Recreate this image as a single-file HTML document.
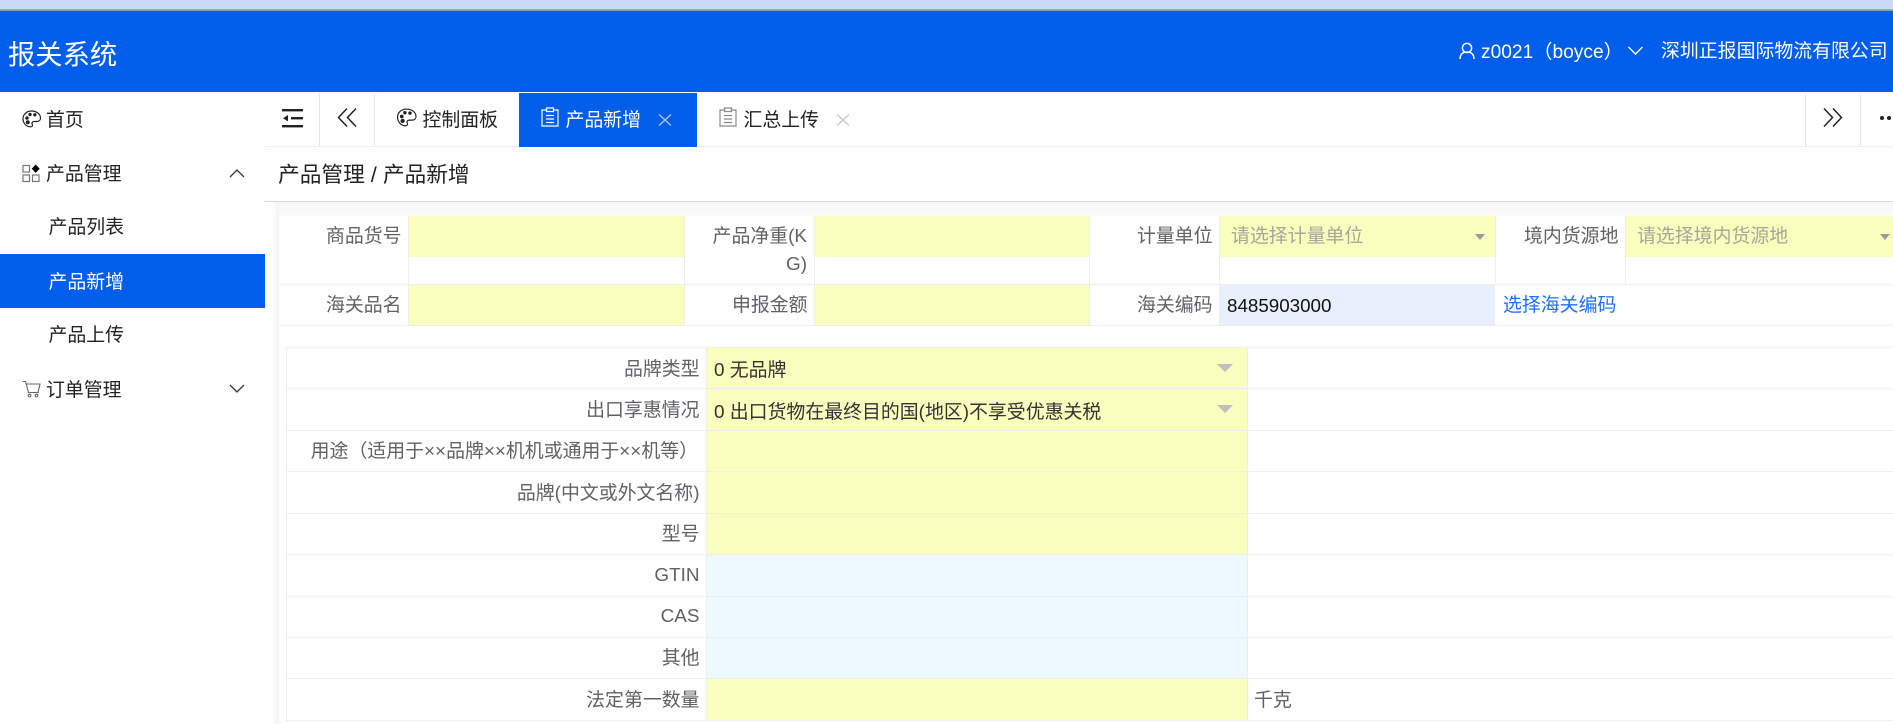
<!DOCTYPE html>
<html lang="zh"><head><meta charset="utf-8"><title>报关系统</title>
<style>
html,body{margin:0;padding:0;width:1893px;height:724px;overflow:hidden;background:#fff}
body{position:relative;font-family:"Liberation Sans","Noto Sans CJK SC",sans-serif;font-size:18.9px;color:#222}
.a,.t,svg{position:absolute}
.t{line-height:30px;white-space:nowrap;margin-top:-13.5px}
.r{text-align:right}
.l{color:#606266}
.y{background:#faffbd}
.b{background:#eef9ff}
.hl{background:#eeeeee}
</style></head><body>
<!-- top chrome -->
<div class="a" style="left:0;top:0;width:1893px;height:9px;background:#c9daf5"></div>
<div class="a" style="left:0;top:9px;width:1893px;height:2px;background:#8fa3c4"></div>
<div class="a" style="left:0;top:11px;width:1893px;height:81px;background:#005eeb"></div>
<div class="t" style="left:8px;top:53px;font-size:27.3px;color:#fff">报关系统</div>
<svg style="left:1458px;top:42px" width="18" height="18" viewBox="0 0 18 18" fill="none" stroke="#fff" stroke-width="1.5"><circle cx="9" cy="6" r="4.6"/><path d="M2 17c0-5 3-7 7-7s7 2 7 7"/></svg>
<div class="t" style="left:1481px;top:51px;color:#fff;font-size:19.2px">z0021（boyce）</div>
<svg style="left:1627px;top:46px" width="17" height="10" viewBox="0 0 17 10" fill="none" stroke="#fff" stroke-width="1.4"><path d="M1.500 1l7 7 7-7"/></svg>
<div class="t" style="left:1661px;top:50px;color:#fff">深圳正报国际物流有限公司</div>

<!-- sidebar -->
<svg style="left:22px;top:110px" width="19" height="18" viewBox="0 0 19 18" fill="none" stroke="#222" stroke-width="1.200"><path d="M9.500 1C4.500 1 1 4.500 1 8.800c0 4.500 3.500 8 7.500 8 2 0 2.300-1.300 1.700-2.500-.7-1.500.3-2.800 2-2.800h2.500c2.300 0 3.800-1.400 3.800-3.300C18.500 4 14.500 1 9.500 1z"/><circle cx="5" cy="8" r="1.200" fill="#222"/><circle cx="8" cy="4.500" r="1.100" fill="#222"/><circle cx="12.800" cy="4.800" r="1.100" fill="#222"/><circle cx="5.800" cy="12.300" r="1.400" fill="#222"/></svg>
<div class="t" style="left:46px;top:119px">首页</div>
<svg style="left:22px;top:164px" width="19" height="19" viewBox="0 0 19 19" fill="none" stroke="#777" stroke-width="1.200"><rect x="1" y="1.500" width="6.500" height="6.500"/><rect x="1" y="11" width="6.500" height="6.500"/><rect x="10.500" y="11" width="6.500" height="6.500"/><path d="M13.700.5l4 4.200-4 4.200-4-4.200z" fill="#000" stroke="none"/></svg>
<div class="t" style="left:46px;top:173px">产品管理</div>
<svg style="left:229px;top:169px" width="16" height="9" viewBox="0 0 16 9" fill="none" stroke="#333" stroke-width="1.300"><path d="M1 8l7-7 7 7"/></svg>
<div class="t" style="left:48.500px;top:226px">产品列表</div>
<div class="a" style="left:0;top:254px;width:265px;height:54px;background:#005eeb"></div>
<div class="t" style="left:48.500px;top:281px;color:#fff">产品新增</div>
<div class="t" style="left:48.500px;top:334px">产品上传</div>
<svg style="left:22px;top:380px" width="19" height="18" viewBox="0 0 19 18" fill="none" stroke="#666" stroke-width="1.100"><path d="M.5 1.500h3l3 11h9.500l2-8.500H4.500"/><circle cx="7.500" cy="15.500" r="1.300"/><circle cx="14.500" cy="15.500" r="1.300"/></svg>
<div class="t" style="left:46px;top:389px">订单管理</div>
<svg style="left:229px;top:384px" width="16" height="9" viewBox="0 0 16 9" fill="none" stroke="#333" stroke-width="1.300"><path d="M1 1l7 7 7-7"/></svg>

<!-- tabs -->
<div class="a" style="left:265px;top:146px;width:1539px;height:1px;background:#eee"></div>
<div class="a" style="left:1805px;top:146px;width:88px;height:1px;background:#eee"></div>
<div class="a" style="left:319px;top:93px;width:1px;height:53px;background:#e6e6e6"></div>
<div class="a" style="left:374px;top:93px;width:1px;height:53px;background:#e6e6e6"></div>
<div class="a" style="left:1805px;top:93px;width:1px;height:53px;background:#e6e6e6"></div>
<div class="a" style="left:1860px;top:93px;width:1px;height:53px;background:#e6e6e6"></div>
<svg style="left:282px;top:108px" width="22" height="20" viewBox="0 0 22 20" fill="#222"><rect x="0" y="1" width="21" height="2.400"/><rect x="9" y="9" width="12" height="2.400"/><rect x="0" y="17" width="21" height="2.400"/><path d="M1 10.200l5-3.200v6.400z"/></svg>
<svg style="left:337px;top:107px" width="21" height="21" viewBox="0 0 21 21" fill="none" stroke="#222" stroke-width="1.500"><path d="M10 1.500L1.500 10.500l8.500 9M19 1.500l-8.500 9 8.500 9"/></svg>
<svg style="left:396px;top:108px" width="21" height="19" viewBox="0 0 19 18" fill="none" stroke="#222" stroke-width="1.100"><path d="M9.500 1C4.500 1 1 4.500 1 8.800c0 4.500 3.500 8 7.500 8 2 0 2.300-1.300 1.700-2.500-.7-1.500.3-2.800 2-2.800h2.500c2.300 0 3.800-1.400 3.800-3.300C18.500 4 14.500 1 9.500 1z"/><circle cx="5" cy="8" r="1.200" fill="#222"/><circle cx="8" cy="4.500" r="1.100" fill="#222"/><circle cx="12.800" cy="4.800" r="1.100" fill="#222"/><circle cx="5.800" cy="12.300" r="1.400" fill="#222"/></svg>
<div class="t" style="left:422.500px;top:119px">控制面板</div>
<div class="a" style="left:519px;top:93px;width:178px;height:54px;background:#005eeb"></div>
<svg style="left:541px;top:107px" width="18" height="20" viewBox="0 0 18 20" fill="none" stroke="#fff" stroke-width="1.200"><path d="M5.500 3H1v16h16V3h-4.500"/><path d="M5.500 1h7v3.500h-7z"/><path d="M5 8.500h8M5 12h8M5 15.500h8"/></svg>
<div class="t" style="left:565.500px;top:119px;color:#fff">产品新增</div>
<svg style="left:658px;top:114px" width="14" height="12" viewBox="0 0 14 12" stroke="#b9c6e0" stroke-width="1.200" fill="none"><path d="M1 .5l12 11M13 .5L1 11.500"/></svg>
<svg style="left:719px;top:107px" width="18" height="20" viewBox="0 0 18 20" fill="none" stroke="#8a8a8a" stroke-width="1.200"><path d="M5.500 3H1v16h16V3h-4.500"/><path d="M5.500 1h7v3.500h-7z"/><path d="M5 8.500h8M5 12h8M5 15.500h8"/></svg>
<div class="t" style="left:743.500px;top:119px">汇总上传</div>
<svg style="left:836px;top:114px" width="14" height="12" viewBox="0 0 14 12" stroke="#c4c4c4" stroke-width="1.200" fill="none"><path d="M1 .5l12 11M13 .5L1 11.500"/></svg>
<svg style="left:1822px;top:107px" width="21" height="21" viewBox="0 0 21 21" fill="none" stroke="#222" stroke-width="1.500"><path d="M2 1.500l8.500 9-8.500 9M11 1.500l8.500 9-8.500 9"/></svg>
<div class="a" style="left:1880px;top:116px;width:4px;height:4px;border-radius:50%;background:#222"></div>
<div class="a" style="left:1887px;top:116px;width:4px;height:4px;border-radius:50%;background:#222"></div>

<!-- breadcrumb -->
<div class="t" style="left:278px;top:173px;font-size:21.700px">产品管理 / 产品新增</div>
<div class="a" style="left:265px;top:201px;width:1628px;height:1px;background:#d9d9d9"></div>
<div class="a" style="left:265px;top:202px;width:1628px;height:14px;background:linear-gradient(#f6f6f6,#fbfbfb)"></div>
<div class="a" style="left:265px;top:202px;width:14px;height:522px;background:linear-gradient(90deg,#fff,#fff 50%,#f3f3f3)"></div>

<!-- card -->
<div class="a" style="left:279px;top:216px;width:1614px;height:508px;background:#fff"></div>
<div class="a hl" style="left:279px;top:284px;width:1614px;height:1px"></div>
<div class="a hl" style="left:279px;top:325px;width:1614px;height:1px"></div>
<div class="a hl" style="left:408px;top:216px;width:1px;height:109px"></div>
<div class="a hl" style="left:684px;top:216px;width:1px;height:109px"></div>
<div class="a hl" style="left:814px;top:216px;width:1px;height:109px"></div>
<div class="a hl" style="left:1089px;top:216px;width:1px;height:109px"></div>
<div class="a hl" style="left:1219px;top:216px;width:1px;height:109px"></div>
<div class="a hl" style="left:1495px;top:216px;width:1px;height:68px"></div>
<div class="a hl" style="left:1625px;top:216px;width:1px;height:68px"></div>

<div class="a y" style="left:409px;top:216px;width:275px;height:41px"></div>
<div class="a y" style="left:815px;top:216px;width:274px;height:41px"></div>
<div class="a y" style="left:1220px;top:216px;width:275px;height:41px"></div>
<div class="a y" style="left:1626px;top:216px;width:267px;height:41px"></div>
<div class="a y" style="left:409px;top:285px;width:275px;height:40px"></div>
<div class="a y" style="left:815px;top:285px;width:274px;height:40px"></div>
<div class="a" style="left:1220px;top:285px;width:275px;height:40px;background:#e8f0fe"></div>

<div class="t l" style="left:326px;top:235px">商品货号</div>
<div class="t l r" style="right:1086px;top:235px">产品净重(K</div>
<div class="t l r" style="right:1086px;top:263px">G)</div>
<div class="t l" style="left:1137px;top:235px">计量单位</div>
<div class="t" style="left:1231px;top:235px;color:#a6a69a">请选择计量单位</div>
<div class="a" style="left:1475px;top:234px;width:0;height:0;border-left:5.500px solid transparent;border-right:5.500px solid transparent;border-top:6px solid #9a9a9a"></div>
<div class="t l" style="left:1524px;top:235px">境内货源地</div>
<div class="t" style="left:1637px;top:235px;color:#a6a69a">请选择境内货源地</div>
<div class="a" style="left:1880px;top:234px;width:0;height:0;border-left:5.500px solid transparent;border-right:5.500px solid transparent;border-top:6px solid #9a9a9a"></div>

<div class="t l" style="left:326px;top:304px">海关品名</div>
<div class="t l" style="left:732px;top:304px">申报金额</div>
<div class="t l" style="left:1137px;top:304px">海关编码</div>
<div class="t" style="left:1227px;top:304px;color:#111;font-size:18.800px">8485903000</div>
<div class="t" style="left:1503px;top:304px;color:#1e6fff">选择海关编码</div>

<!-- table 2 -->
<div class="a y" style="left:707px;top:348px;width:540px;height:206px"></div>
<div class="a b" style="left:707px;top:555px;width:540px;height:123px"></div>
<div class="a y" style="left:707px;top:679px;width:540px;height:41px"></div>
<div class="a hl" style="left:287px;top:347px;width:1606px;height:1px"></div>
<div class="a hl" style="left:287px;top:388px;width:1606px;height:1px"></div>
<div class="a hl" style="left:287px;top:430px;width:1606px;height:1px"></div>
<div class="a hl" style="left:287px;top:471px;width:1606px;height:1px"></div>
<div class="a hl" style="left:287px;top:513px;width:1606px;height:1px"></div>
<div class="a hl" style="left:287px;top:554px;width:1606px;height:1px"></div>
<div class="a hl" style="left:287px;top:596px;width:1606px;height:1px"></div>
<div class="a hl" style="left:287px;top:637px;width:1606px;height:1px"></div>
<div class="a hl" style="left:287px;top:678px;width:1606px;height:1px"></div>
<div class="a hl" style="left:287px;top:720px;width:1606px;height:1px"></div>
<div class="a hl" style="left:286px;top:347px;width:1px;height:374px"></div>
<div class="a hl" style="left:706px;top:347px;width:1px;height:374px"></div>
<div class="a hl" style="left:1247px;top:347px;width:1px;height:374px"></div>

<div class="t l r" style="right:1193.500px;top:368px">品牌类型</div>
<div class="t" style="left:714px;top:369px;color:#333">0 无品牌</div>
<div class="a" style="left:1217px;top:364px;width:0;height:0;border-left:8px solid transparent;border-right:8px solid transparent;border-top:8px solid #c0c0c0"></div>
<div class="t l r" style="right:1193.500px;top:409px">出口享惠情况</div>
<div class="t" style="left:714px;top:411px;color:#333">0 出口货物在最终目的国(地区)不享受优惠关税</div>
<div class="a" style="left:1217px;top:405px;width:0;height:0;border-left:8px solid transparent;border-right:8px solid transparent;border-top:8px solid #c0c0c0"></div>
<div class="t l r" style="right:1195px;top:450px">用途（适用于××品牌××机机或通用于××机等）</div>
<div class="t l r" style="right:1193.500px;top:492px">品牌(中文或外文名称)</div>
<div class="t l r" style="right:1193.500px;top:533px">型号</div>
<div class="t l r" style="right:1193.500px;top:574px">GTIN</div>
<div class="t l r" style="right:1193.500px;top:615px">CAS</div>
<div class="t l r" style="right:1193.500px;top:657px">其他</div>
<div class="t l r" style="right:1193.500px;top:699px">法定第一数量</div>
<div class="t l" style="left:1254px;top:699px">千克</div>
</body></html>
